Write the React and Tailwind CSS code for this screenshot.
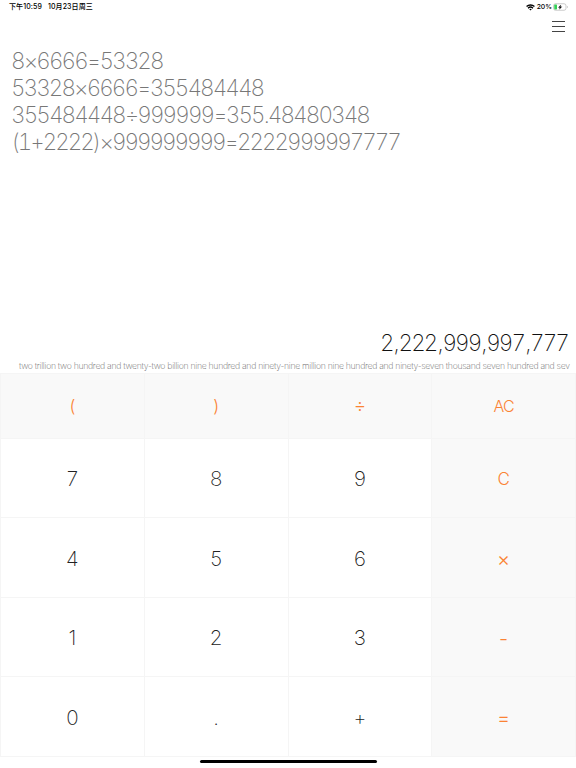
import React from "react";
import clsx from "clsx";

const history = [
    { text: "8×6666=53328", spacing: "tracking-[-1.9px]" },
    { text: "53328×6666=355484448", spacing: "tracking-[-1.93px]" },
    { text: "355484448÷999999=355.48480348", spacing: "tracking-[-1.9px]" },
    { text: "(1+2222)×999999999=2222999997777", spacing: "tracking-[-2.03px]" }
];

const result = ["2", "222", "999", "997", "777"];

const keys = [
    "(", ")", "÷", "AC",
    "7", "8", "9", "C",
    "4", "5", "6", "×",
    "1", "2", "3", "-",
    "0", ".", "+", "="
];

function StatusBar() {
    return (
        <div className="h-[14px] pl-[9px] pr-[8px] flex items-center justify-between text-[7px] leading-[14px] font-medium text-black">
            <div className="flex gap-[6px] tracking-[0.1px] font-['Inter','Noto_Sans_CJK_SC',sans-serif]">
                <span>下午10:59</span>
                <span>10月23日周三</span>
            </div>
            <div className="flex items-center gap-[1px] font-['Inter',sans-serif]">
                <svg className="w-[9px] h-[7px] mr-px" viewBox="0 0 16 12" fill="none" stroke="#000" strokeWidth="2.4">
                    <path d="M1 4.4a10 10 0 0 1 14 0M3.600 7.200a6.300 6.300 0 0 1 8.800 0" />
                    <path d="M8 11.500 5.800 9.300a3.200 3.200 0 0 1 4.400 0z" fill="#000" stroke="none" />
                </svg>
                <span className="text-[6.800px]">20%</span>
                <svg className="w-[15px] h-[8px]" viewBox="0 0 30 16" fill="none">
                    <rect x="1" y="1.500" width="25" height="13" rx="4" stroke="#aaa" strokeWidth="1.2" />
                    <rect x="2.500" y="3" width="5.500" height="10" rx="1.500" fill="#34d058" />
                    <path d="M15.500 4 11 9h3L13 12.500 17.500 7.500h-3z" fill="#000" stroke="#000" strokeWidth="0.6" />
                    <path d="M28 6v4c1-.4 1.500-1.200 1.500-2S29 6.400 28 6z" fill="#aaa" />
                </svg>
            </div>
        </div>
    );
}

function Keypad() {
    return (
        <div className="grid grid-cols-4 grid-rows-[65px_79px_80px_79px_80px] h-[384px] border-l border-t border-[#f5f5f5]">
            {keys.map((key, index) => {
                const shaded = index < 4 || index % 4 === 3;
                const operator = "×-+=".includes(key);

                return (
                    <button
                        key={key}
                        className={clsx(
                            "flex items-center justify-center border-r border-b border-[#f5f5f5]",
                            shaded ? "bg-[#f9f9f9] text-[#fb8334] font-light" : "bg-white text-[#222] font-extralight",
                            key === "AC" && "text-[16px] tracking-[-0.9px]",
                            key === "C" && "text-[17px] pt-[3px]",
                            (key === "(" || key === ")") && "text-[17px] pt-[2px] font-extralight",
                            key === "÷" && "text-[19px] pt-px",
                            operator && "text-[20px] pt-[3px]",
                            !operator && !shaded && "text-[20.500px] pt-[3px]"
                        )}
                    >
                        {key}
                    </button>
                );
            })}
        </div>
    );
}

export default function App() {
    return (
        <div className="w-[576px] h-[768px] bg-white flex flex-col overflow-hidden font-['Inter',sans-serif]">
            <StatusBar />

            {/* Menu */}
            <div className="h-[33px] pt-[7px] pr-[11px] flex justify-end">
                <button className="w-[13px] h-[11px] flex flex-col justify-between">
                    <span className="w-full h-px bg-[#444]" />
                    <span className="w-full h-px bg-[#444]" />
                    <span className="w-full h-px bg-[#444]" />
                </button>
            </div>

            {/* Past calculations */}
            <div className="pl-[11px] flex-1 text-[22.500px] leading-[27px] tabular-nums font-extralight text-[#777]">
                {history.map((line) => (
                    <div key={line.text} className={line.spacing}>{line.text}</div>
                ))}
            </div>

            {/* Current result, with the amount in words */}
            <div className="pr-[8px] h-[30px] text-right text-[22.500px] leading-[29px] tracking-[-1.9px] tabular-nums font-extralight text-[#111]">
                {result.map((group, index) => (
                    <React.Fragment key={index}>
                        {index > 0 && <span className="ml-[1px] tracking-[-1.1px]">,</span>}
                        {group}
                    </React.Fragment>
                ))}
            </div>
            <div className="ml-[19px] h-[15px] pt-[2px] whitespace-nowrap text-[8.700px] leading-[12px] tracking-[-0.3px] font-extralight text-[#666]">
                two trillion two hundred and twenty-two billion nine hundred and ninety-nine million nine hundred and ninety-seven thousand seven hundred and sev
            </div>

            <Keypad />

            {/* Home indicator */}
            <div className="h-[11px] pt-[3px] flex justify-center">
                <div className="w-[177px] h-[3px] rounded-full bg-black" />
            </div>
        </div>
    );
}
